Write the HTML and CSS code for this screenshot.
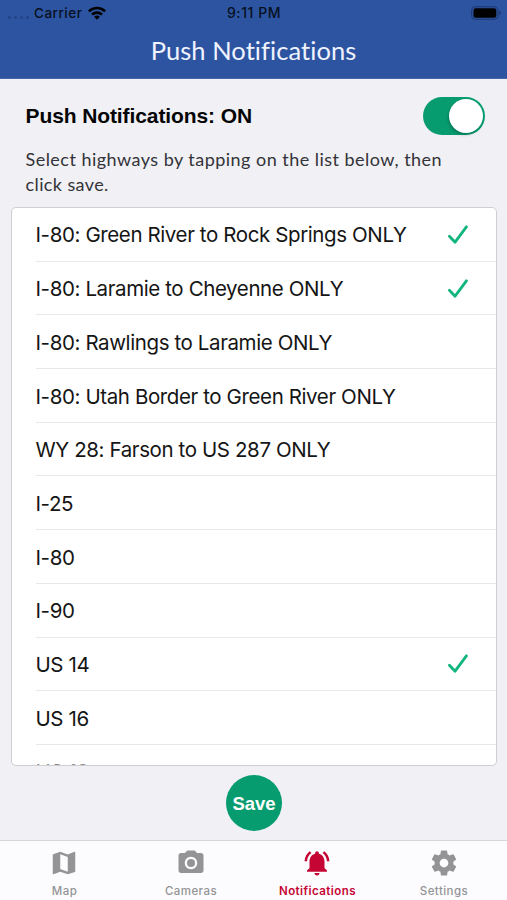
FILE: index.html
```html
<!DOCTYPE html>
<html lang="en">
<head>
<meta charset="utf-8">
<title>Push Notifications</title>
<link rel="stylesheet" href="styles.css">
</head>
<body>
<div class="app">
  <header class="header">
    <div class="status">
      <div class="status-left">
        <span class="dots"><i></i><i></i><i></i><i></i></span>
        <span class="carrier">Carrier</span>
        <svg class="wifi" viewBox="0 0 18 14" width="18" height="14"><path d="M0 4.4a12.8 12.8 0 0 1 18 0l-1.7 1.9a10.3 10.3 0 0 0-14.6 0zM3.1 7.7a8.4 8.4 0 0 1 11.8 0l-1.8 1.9a5.8 5.8 0 0 0-8.2 0zM6.1 10.8a4.2 4.2 0 0 1 5.8 0L9 13.8z"/></svg>
      </div>
      <span class="time">9:11 PM</span>
      <div class="status-right">
        <svg viewBox="0 0 31 14" width="31" height="14"><rect x=".7" y=".7" width="26.3" height="12.6" rx="4" fill="none" stroke="#1c3770" stroke-width="1.1"/><rect x="2.5" y="2.3" width="22.8" height="9.4" rx="2.3"/><path d="M28.4 4.8q1.6.6 1.6 2.2t-1.6 2.2z" fill="#1c3770"/></svg>
      </div>
    </div>
    <h1 class="title">Push Notifications</h1>
  </header>

  <main class="content">
    <div class="toggle-row">
      <h2 class="toggle-label">Push Notifications: ON</h2>
      <span class="switch"><span class="knob"></span></span>
    </div>
    <p class="hint">Select highways by tapping on the list below, then<br><span class="hint-end">click save.</span></p>

    <ul class="list">
      <li class="row"><span>I-80: Green River to Rock Springs ONLY</span><svg class="check" viewBox="0 0 20 20"><path d="M1.4 11.2l5.700 6L18.400 1.800"/></svg></li>
      <li class="row"><span>I-80: Laramie to Cheyenne ONLY</span><svg class="check" viewBox="0 0 20 20"><path d="M1.4 11.2l5.700 6L18.400 1.800"/></svg></li>
      <li class="row"><span>I-80: Rawlings to Laramie ONLY</span></li>
      <li class="row"><span>I-80: Utah Border to Green River ONLY</span></li>
      <li class="row"><span>WY 28: Farson to US 287 ONLY</span></li>
      <li class="row"><span>I-25</span></li>
      <li class="row"><span>I-80</span></li>
      <li class="row"><span>I-90</span></li>
      <li class="row"><span>US 14</span><svg class="check" viewBox="0 0 20 20"><path d="M1.4 11.2l5.700 6L18.400 1.800"/></svg></li>
      <li class="row"><span>US 16</span></li>
      <li class="row row-cut"><span>US 18</span></li>
    </ul>

    <button class="save">Save</button>
  </main>

  <nav class="tabs">
    <div class="tab">
      <svg viewBox="0 0 24 24" width="30" height="30"><path d="M20.5 3l-.16.03L15 5.1 9 3 3.36 4.9c-.21.07-.36.25-.36.48V20.500c0 .28.22.5.5.5l.16-.03L9 18.900l6 2.100 5.640-1.900c.21-.07.36-.25.36-.48V3.500c0-.28-.22-.5-.5-.5zM15 19l-6-2.110V5l6 2.110V19z"/></svg>
      <span>Map</span>
    </div>
    <div class="tab">
      <svg viewBox="0 0 24 24" width="30" height="30"><circle cx="12" cy="12" r="3.2"/><path d="M9 2L7.170 4H4c-1.100 0-2 .9-2 2v12c0 1.100.9 2 2 2h16c1.100 0 2-.9 2-2V6c0-1.100-.9-2-2-2h-3.170L15 2H9zm3 15c-2.760 0-5-2.240-5-5s2.240-5 5-5 5 2.240 5 5-2.240 5-5 5z"/></svg>
      <span>Cameras</span>
    </div>
    <div class="tab active">
      <svg viewBox="0 0 24 24" width="30" height="30"><path d="M7.580 4.080L6.150 2.650C3.750 4.480 2.170 7.300 2.030 10.500h2c.15-2.650 1.510-4.970 3.550-6.420zm12.390 6.420h2c-.15-3.200-1.730-6.020-4.120-7.850l-1.420 1.430c2.020 1.450 3.390 3.770 3.540 6.420zM18 11c0-3.070-1.640-5.640-4.500-6.320V4c0-.83-.67-1.500-1.500-1.500s-1.500.67-1.500 1.500v.68C7.630 5.360 6 7.920 6 11v5l-2 2v1h16v-1l-2-2v-5zm-6 11c.14 0 .27-.01.4-.04.65-.14 1.180-.58 1.440-1.180.1-.24.15-.5.150-.78h-4c.01 1.100.9 2 2.010 2z"/></svg>
      <span>Notifications</span>
    </div>
    <div class="tab">
      <svg viewBox="0 0 24 24" width="30" height="30"><path d="M19.430 12.980c.04-.32.07-.64.07-.98s-.03-.66-.07-.98l2.110-1.650c.19-.15.24-.42.12-.64l-2-3.460c-.12-.22-.39-.3-.61-.22l-2.490 1c-.52-.4-1.080-.73-1.690-.98l-.38-2.650C14.460 2.180 14.250 2 14 2h-4c-.25 0-.46.18-.49.42l-.38 2.650c-.61.25-1.170.59-1.690.98l-2.490-1c-.23-.09-.49 0-.61.22l-2 3.460c-.13.22-.07.49.12.64l2.110 1.650c-.04.32-.07.65-.07.98s.03.66.07.98l-2.110 1.650c-.19.15-.24.42-.12.64l2 3.460c.12.22.39.3.61.22l2.490-1c.52.4 1.080.73 1.690.98l.38 2.650c.03.24.24.42.49.42h4c.25 0 .46-.18.49-.42l.38-2.650c.61-.25 1.170-.59 1.690-.98l2.490 1c.23.09.49 0 .61-.22l2-3.460c.12-.22.07-.49-.12-.64l-2.110-1.650zM12 15.500c-1.930 0-3.500-1.570-3.500-3.500s1.570-3.500 3.500-3.500 3.500 1.570 3.500 3.500-1.570 3.500-3.500 3.500z"/></svg>
      <span>Settings</span>
    </div>
  </nav>
</div>
</body>
</html>
```
FILE: styles.css
```css
* { box-sizing: border-box; }
body { margin: 0; background: #f0f0f5; font-family: Inter, sans-serif; }
.app { width: 507px; height: 900px; display: flex; flex-direction: column; overflow: hidden; }

.header { height: 79px; background: #2d54a0; border-bottom: 1px solid #4668aa; flex: none; }
.status { height: 26px; display: grid; grid-template-columns: 1fr auto 1fr; align-items: center; font-size: 13.5px; font-weight: 500; color: #071022; }
.status-left { display: flex; align-items: center; padding-left: 8px; }
.dots { display: flex; gap: 3px; padding-top: 8px; width: 26px; }
.dots i { width: 3px; height: 3px; border-radius: 50%; background: #234488; }
.carrier { letter-spacing: .5px; }
.time { font-size: 14px; letter-spacing: .55px; padding-left: 1px; line-height: 24px; margin-top: -1px; }
.wifi { margin-left: 5.500px; }
.status-right { display: flex; justify-content: flex-end; padding-right: 5px; }
.title { margin: 5px 0 0; text-align: center; font: 400 25.5px/38px Lato, sans-serif; color: #eef3ff; letter-spacing: .06px; }

.content { flex: 1; min-height: 0; display: flex; flex-direction: column; padding: 18px 10px 0 11px; }
.toggle-row { display: flex; justify-content: space-between; align-items: center; height: 38px; padding: 0 12px 0 14.500px; }
.toggle-label { margin: 0; font: 700 21px/38px "Liberation Sans", sans-serif; color: #050505; letter-spacing: -.1px; }
.switch { width: 62.500px; height: 38px; border-radius: 19px; background: #079c70; display: flex; justify-content: flex-end; padding: 2px; }
.knob { width: 34px; height: 34px; border-radius: 50%; background: #fff; box-shadow: -1px 2px 3px rgba(0, 0, 0, .2); }
.hint { margin: 12px 0 0 14.500px; font: 400 18px/25px Lato, sans-serif; color: #333338; letter-spacing: .47px; white-space: nowrap; }
.hint-end { letter-spacing: .4px; }

.list { list-style: none; margin: 10px 0 0; padding: 0 0 0 24px; height: 559px; flex: none; overflow: hidden; background: #fff; border: 1px solid #cfcfd2; border-radius: 5px; }
.row { height: 53.700px; display: flex; align-items: center; justify-content: space-between; border-bottom: 1px solid #e8e8ea; padding: 1.200px 28px 0 0; font-size: 20.500px; color: #151515; white-space: nowrap; letter-spacing: -.39px; }
.row span { margin-left: -.5px; }
.row-cut { color: #8c8c90; padding-top: 0; }
.check { width: 20px; height: 20px; fill: none; stroke: #13b57e; stroke-width: 2.800; stroke-linecap: round; stroke-linejoin: round; }
.save { align-self: center; margin: 9px 0 0; width: 56px; height: 56px; flex: none; border: 0; border-radius: 50%; background: #079c70; color: #fff; padding: 2px 0 0; font: 700 18.500px "Liberation Sans", sans-serif; }

.tabs { height: 60px; flex: none; display: flex; background: #fcfcfe; border-top: 1px solid #d6d6da; padding: 0 0 0 1px; }
.tab { flex: 1; display: flex; flex-direction: column; align-items: center; padding-top: 7px; color: #949496; font-size: 11.500px; font-weight: 500; letter-spacing: .45px; }
.tab svg { fill: currentColor; }
.tab span { line-height: 14px; margin: 6px 0 0 .5px; }
.tab.active { color: #c50634; font-weight: 600; }
```
